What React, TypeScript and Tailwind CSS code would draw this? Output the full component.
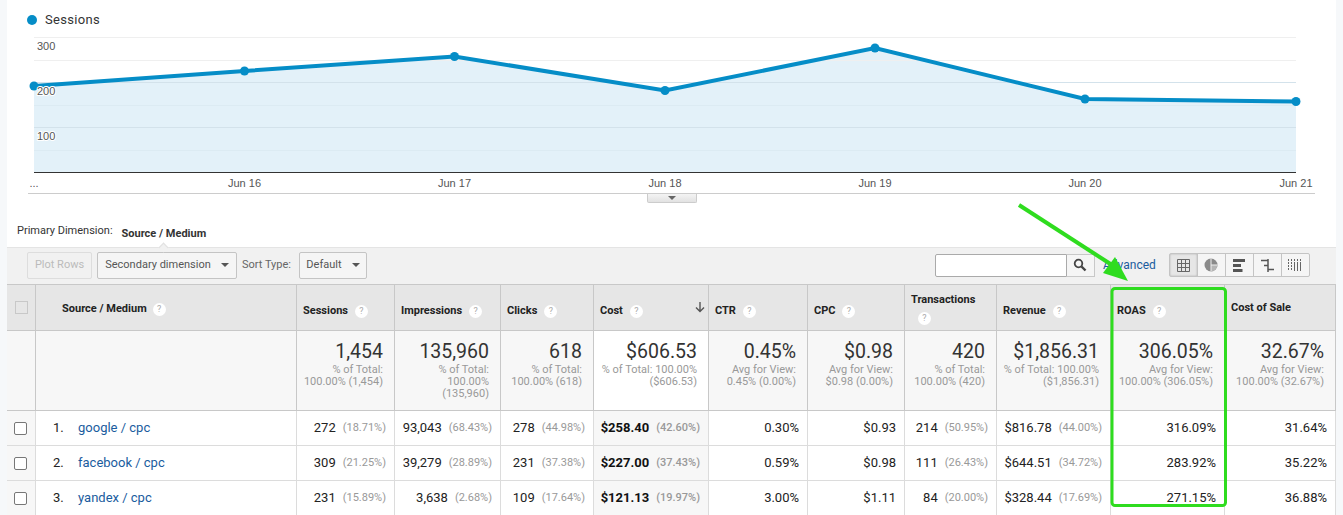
import React from "react";

const font = { fontFamily: "Roboto, sans-serif" };

const Q = ({ className = "" }: { className?: string }) => (
  <span className={"inline-flex h-[13px] w-[13px] items-center justify-center rounded-full bg-white text-[9px] font-normal leading-none text-[#aaa] " + className}>?</span>
);

const pts = "34,86 244.5,71 454.5,56.5 665,90.5 875,48 1085,99 1296,101.5";
const ptList = pts.split(" ").map((p) => p.split(",").map(Number));
const axisFont = "'Liberation Sans', Arial, sans-serif";

function Chart() {
  return (
    <svg width={1336} height={195} viewBox="0 0 1336 195" className="block">
      <polygon points={`34,172 ${pts} 1296,172`} fill="#e3f1f9" />
      {[37.5, 60.5, 82.5, 105.5, 127.5, 150.5].map((y) => (
        <line key={y} x1={34} x2={1296} y1={y} y2={y} stroke={y < 70 ? "#efefef" : y === 82.5 || y === 127.5 ? "#d3e2eb" : "#dcebf3"} />
      ))}
      <line x1={34} x2={1296} y1={172.5} y2={172.5} stroke="#333" />
      <polyline points={pts} fill="none" stroke="#058dc7" strokeWidth={4} />
      {ptList.map(([x, y]) => (
        <circle key={x} cx={x} cy={y} r={4.5} fill="#058dc7" />
      ))}
      {[["300", 50], ["200", 95], ["100", 140]].map(([t, y]) => (
        <text key={t as string} x={37} y={y as number} fontSize={11} fill="#555" fontFamily={axisFont} stroke="#fff" strokeWidth={2} paintOrder="stroke">{t}</text>
      ))}
      {[["Jun 16", 244.5], ["Jun 17", 454.5], ["Jun 18", 665], ["Jun 19", 875], ["Jun 20", 1085], ["Jun 21", 1296]].map(([t, x]) => (
        <text key={t as string} x={x as number} y={187} textAnchor="middle" fontSize={11} fill="#555" fontFamily={axisFont}>{t}</text>
      ))}
      <text x={34} y={187} textAnchor="middle" fontSize={11} fill="#555" fontFamily={axisFont}>...</text>
      <line x1={28} x2={1315} y1={193.5} y2={193.5} stroke="#ccc" />
    </svg>
  );
}

const cols = "grid-cols-[29px_261px_98px_106px_93px_115px_99px_97px_92px_114px_114px_111px]";

const HeadCell = ({ label, q = true, wrap = false, arrow = false, top = false }: { label: string; q?: boolean; wrap?: boolean; arrow?: boolean; top?: boolean }) => (
  <div className={"relative flex border-r border-[#c8c8c8] px-[6px] text-[11px] font-bold text-[#222] " + (wrap ? "flex-col items-start pt-[7px]" : top ? "items-center pt-[1px]" : "items-center pt-[8px]")}>
    <span className="whitespace-nowrap">{label}</span>
    {q && <Q className={wrap ? "mt-[3px] ml-[7px]" : "ml-[7px]"} />}
    {arrow && (
      <svg className="absolute right-[2px] top-[16px]" width="12" height="13" viewBox="0 0 12 13">
        <path d="M6 1v9M2 6.5 6 10.5 10 6.5" fill="none" stroke="#555" strokeWidth="1.4" />
      </svg>
    )}
  </div>
);

const Total = ({ v, lines, active = false }: { v: string; lines: string[]; active?: boolean }) => (
  <div className={"border-r border-[#c8c8c8] pr-[11px] pl-[3px] pt-[9px] text-right " + (active ? "bg-white" : "")}>
    <div className="text-[19.5px] leading-[24px] text-[#333]">{v}</div>
    {lines.map((l) => (
      <div key={l} className="whitespace-nowrap text-[11px] leading-[12px] text-[#999]">{l}</div>
    ))}
  </div>
);

const Cell = ({ v, p, bold = false, active = false }: { v: string; p?: string; bold?: boolean; active?: boolean }) => (
  <div className={"flex items-center justify-end gap-[7px] border-r border-b border-[#dcdcdc] pr-[8px] text-[13px] " + (active ? "bg-[#f7f7f7]" : "")}>
    <span className={bold ? "font-bold text-[#111]" : "text-[#222]"}>{v}</span>
    {p && <span className={"text-[11px] text-[#999] " + (bold ? "font-medium" : "")}>{p}</span>}
  </div>
);

const rows = [
  { n: "1.", name: "google / cpc", c: [["272", "(18.71%)"], ["93,043", "(68.43%)"], ["278", "(44.98%)"], ["$258.40", "(42.60%)"], ["0.30%"], ["$0.93"], ["214", "(50.95%)"], ["$816.78", "(44.00%)"], ["316.09%"], ["31.64%"]] },
  { n: "2.", name: "facebook / cpc", c: [["309", "(21.25%)"], ["39,279", "(28.89%)"], ["231", "(37.38%)"], ["$227.00", "(37.43%)"], ["0.59%"], ["$0.98"], ["111", "(26.43%)"], ["$644.51", "(34.72%)"], ["283.92%"], ["35.22%"]] },
  { n: "3.", name: "yandex / cpc", c: [["231", "(15.89%)"], ["3,638", "(2.68%)"], ["109", "(17.64%)"], ["$121.13", "(19.97%)"], ["3.00%"], ["$1.11"], ["84", "(20.00%)"], ["$328.44", "(17.69%)"], ["271.15%"], ["36.88%"]] },
];

const totals: [string, string[]][] = [
  ["1,454", ["% of Total:", "100.00% (1,454)"]],
  ["135,960", ["% of Total:", "100.00%", "(135,960)"]],
  ["618", ["% of Total:", "100.00% (618)"]],
  ["$606.53", ["% of Total: 100.00%", "($606.53)"]],
  ["0.45%", ["Avg for View:", "0.45% (0.00%)"]],
  ["$0.98", ["Avg for View:", "$0.98 (0.00%)"]],
  ["420", ["% of Total:", "100.00% (420)"]],
  ["$1,856.31", ["% of Total: 100.00%", "($1,856.31)"]],
  ["306.05%", ["Avg for View:", "100.00% (306.05%)"]],
  ["32.67%", ["Avg for View:", "100.00% (32.67%)"]],
];

const Caret = () => <span className="ml-[10px] inline-block h-0 w-0 border-x-[4px] border-t-[4px] border-x-transparent border-t-[#555]" />;

function Toolbar() {
  return (
    <div className="relative flex h-[37px] items-center border-t border-[#e4e4e4] bg-[#f1f1f1] pb-[2px] pl-[20px] text-[11px]">
      <span className="absolute left-[153px] -top-[4px] h-[7px] w-[7px] rotate-45 border-l border-t border-[#e0e0e0] bg-[#f1f1f1]" />
      <div className="flex h-[27px] w-[65px] items-center justify-center rounded-[2px] border border-[#ddd] pt-[1px] text-[#bbb]">Plot Rows</div>
      <div className="ml-[5px] flex h-[27px] w-[140px] items-center justify-center rounded-[2px] border border-[#c4c4c4] bg-[#f5f5f5] text-[#555]">Secondary dimension<Caret /></div>
      <span className="ml-[5px] text-[#666]">Sort Type:</span>
      <div className="ml-[8px] flex h-[27px] w-[68px] items-center justify-center rounded-[2px] border border-[#c4c4c4] bg-[#f5f5f5] text-[#555]">Default<Caret /></div>
      <div className="ml-[568px] flex h-[23px] w-[160px]">
        <div className="w-[132px] rounded-l-[2px] border border-[#aaa] bg-white" />
        <div className="flex w-[28px] items-center justify-center border-y border-r border-[#c8c8c8] bg-[#f5f5f5]">
          <svg width="14" height="14" viewBox="0 0 14 14"><circle cx="5.5" cy="5.5" r="3.8" fill="none" stroke="#444" strokeWidth="1.8" /><path d="M8.5 8.5 12.5 12.5" stroke="#444" strokeWidth="2.4" /></svg>
        </div>
      </div>
      <a className="ml-[8px] text-[12px] text-[#1a5c9e]">Advanced</a>
      <div className="ml-[13px] flex h-[24px] w-[141px] rounded-[2px] border border-[#c4c4c4] bg-[#f5f5f5]">
        <div className="flex w-[28px] items-center justify-center border-r border-[#c4c4c4] bg-[#e6e6e6] shadow-[inset_0_0_2px_#aaa]">
          <svg width="13" height="13" viewBox="0 0 13 13"><path d="M.5.5h12v12H.5zM.5 4.5h12M.5 8.5h12M4.5.5v12M8.5.5v12" fill="none" stroke="#666" /></svg>
        </div>
        <div className="flex w-[28px] items-center justify-center border-r border-[#c4c4c4]">
          <svg width="14" height="14" viewBox="0 0 14 14"><circle cx="7" cy="7" r="6.5" fill="#8a8a8a" /><path d="M7 7h6.5A6.5 6.5 0 0 1 7 13.5Z" fill="#b5b5b5" /><path d="M7 .5V13.5M7 7h6.5" fill="none" stroke="#eee" /></svg>
        </div>
        <div className="flex w-[28px] items-center justify-center border-r border-[#c4c4c4]">
          <svg width="12" height="13" viewBox="0 0 12 13"><path d="M0 0h12v3H0zM0 5h8v3H0zM0 10h9.500v3H0z" fill="#555" /></svg>
        </div>
        <div className="flex w-[28px] items-center justify-center border-r border-[#c4c4c4]">
          <svg width="13" height="13" viewBox="0 0 13 13"><path d="M0 1.500h7M3 6.500h4M7 10.500h6M7 0v13" fill="none" stroke="#555" strokeWidth="1.500" /></svg>
        </div>
        <div className="flex flex-1 items-center justify-center">
          <svg width="15" height="12" viewBox="0 0 15 12"><path d="M.5 0v2M.5 3v2M.5 6v2M.5 9v2M3.5 0v2M3.5 3v2M3.5 6v2M3.5 9v2M6.5 0v2M6.5 3v9M9.5 0v2M9.5 3v9M12.5 0v2M12.5 3v9" stroke="#666" fill="none" /></svg>
        </div>
      </div>
    </div>
  );
}

export default function App() {
  return (
    <div className="relative h-[515px] w-[1343px] overflow-hidden bg-[#f6f8fa]" style={font}>
      <div className="ml-[7px] h-[515px] w-[1329px] bg-white">
        <div className="-ml-[7px] h-[202px]">
          <div className="flex h-[40px] items-center pl-[27px] text-[13px] tracking-[0.3px] text-[#333]">
            <span className="mr-[8px] h-[10px] w-[10px] rounded-full bg-[#058dc7]" />
            Sessions
          </div>
          <div className="-mt-[40px]"><Chart /></div>
          <div className="relative ml-[647px] -mt-[1px] flex h-[9px] w-[50px] items-center justify-center rounded-b-[2px] border border-t-0 border-[#ccc] bg-gradient-to-b from-[#f4f4f4] to-[#e2e2e2]">
            <span className="h-0 w-0 border-x-[4px] border-t-[4px] border-x-transparent border-t-[#666]" />
          </div>
        </div>
        <div className="flex h-[45px] items-start pl-[10px] pt-[21px] text-[#333]">
          <span className="text-[11px]">Primary Dimension:</span>
          <span className="ml-[9px] mt-[3px] text-[11px] font-bold">Source / Medium</span>
        </div>
        <Toolbar />
        <div className={"grid " + cols + " grid-rows-[45px_81px_35px_35px_35px] border-t border-[#c8c8c8]"}>
          <div className="flex items-center border-r border-[#c8c8c8] bg-[#e6e6e6] pl-[8px]">
            <span className="h-[13px] w-[13px] border border-[#c8c8c8]" />
          </div>
          <div className="flex items-center border-r border-[#c8c8c8] bg-[#e6e6e6] pt-[3px] pl-[26px] text-[11px] font-bold text-[#222]">
            Source / Medium<Q className="ml-[6px]" />
          </div>
          {["Sessions", "Impressions", "Clicks", "Cost", "CTR", "CPC", "Transactions", "Revenue", "ROAS", "Cost of Sale"].map((l) => (
            <div key={l} className="grid bg-[#e6e6e6]">
              <HeadCell label={l} q={l !== "Cost of Sale"} wrap={l === "Transactions"} arrow={l === "Cost"} top={l === "Cost of Sale"} />
            </div>
          ))}
          <div className="border-y border-r border-[#c8c8c8] bg-[#f7f7f7]" />
          <div className="border-y border-r border-[#c8c8c8] bg-[#f7f7f7]" />
          {totals.map(([v, l], i) => (
            <div key={v} className="grid border-y border-[#c8c8c8] bg-[#f7f7f7]">
              <Total v={v} lines={l} active={i === 3} />
            </div>
          ))}
          {rows.map((r) => (
            <div key={r.n} className="contents">
              <div className="flex items-center border-r border-b border-[#dcdcdc] bg-[#f7f7f7] pl-[7px]">
                <span className="h-[13px] w-[13px] rounded-[2px] border border-[#777] bg-white" />
              </div>
              <div className="flex items-center border-r border-b border-[#dcdcdc] pl-[17px] text-[13px]">
                <span className="w-[25px] text-[#222]">{r.n}</span>
                <a className="text-[#1a5c9e]">{r.name}</a>
              </div>
              {r.c.map(([v, p], i) => (
                <Cell key={i} v={v} p={p} bold={i === 3} active={i === 3} />
              ))}
            </div>
          ))}
        </div>
      </div>
      <svg className="pointer-events-none absolute left-0 top-0" width="1343" height="515" viewBox="0 0 1343 515">
        <path d="M1019 205 1112 265" stroke="#2fdc1f" strokeWidth="4" fill="none" />
        <path d="M1128 281 1103 273 1115 257Z" fill="#2fdc1f" />
        <rect x="1112" y="288.5" width="113.500" height="217" rx="3" fill="none" stroke="#2fdc1f" strokeWidth="3" />
      </svg>
    </div>
  );
}
